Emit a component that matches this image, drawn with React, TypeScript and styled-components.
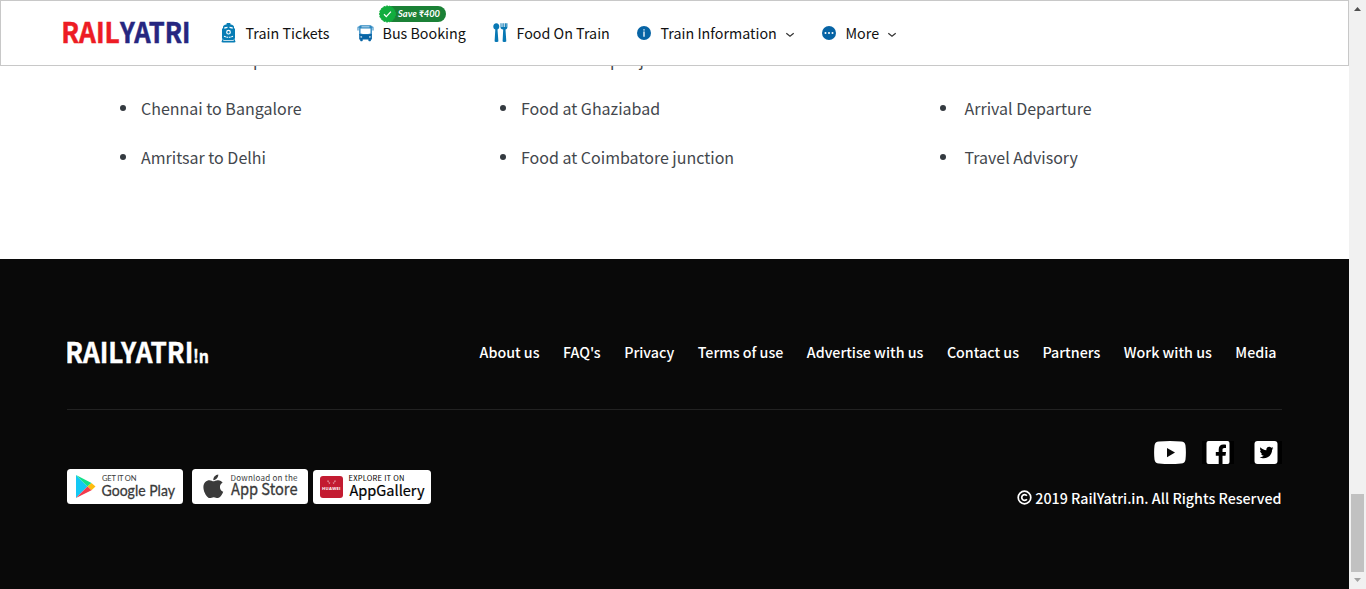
import React from "react";
import styled, { createGlobalStyle } from "styled-components";
import { FaApple, FaTwitter } from "react-icons/fa";

const sans = `"Noto Sans CJK SC", "Noto Sans", sans-serif`;

const GlobalStyle = createGlobalStyle`
  * { box-sizing: border-box; }
  html, body { margin: 0; height: 100%; overflow: hidden; }
  body { background: #fff; font-family: ${sans}; }
  #root { height: 100%; }
  a { color: inherit; text-decoration: none; }
  svg { display: block; }
`;

const Window = styled.div`
  display: flex;
  height: 589px;
  width: 1366px;
`;
const Page = styled.div`
  position: relative;
  width: 1349px;
  height: 589px;
  overflow: hidden;
`;

const Header = styled.header`
  position: absolute;
  inset: 0 0 auto 0;
  z-index: 2;
  height: 66px;
  border: 1px solid #c8c8c8;
  background: #fff;
  display: flex;
  align-items: center;
  padding-left: 61px;
`;
const Brand = styled.a`
  width: 159px;
`;
const Nav = styled.nav`
  display: flex;
  align-items: center;
`;
const NavItem = styled.a<{ $w: number }>`
  position: relative;
  display: flex;
  align-items: center;
  width: ${(p) => p.$w}px;
  height: 64px;
  font-size: 14.3px;
  color: #111;
  white-space: nowrap;
`;
const NavIcon = styled.span<{ $w: number }>`
  flex: none;
  width: ${(p) => p.$w}px;
`;
const NavLabel = styled.span`
  line-height: 22px;
  margin-top: -1px;
`;
const Caret = styled.svg`
  margin: 3px 0 0 8px;
`;
const SaveBadge = styled.span`
  position: absolute;
  left: 22px;
  top: 4px;
`;

const Lists = styled.main`
  height: 259px;
  padding: 34px 0 0 123px;
  display: flex;
`;
const List = styled.ul<{ $w: number; $gap: number }>`
  list-style: none;
  margin: 0;
  padding: 0;
  width: ${(p) => p.$w}px;
  --gap: ${(p) => p.$gap}px;
`;
const ListItem = styled.li`
  display: flex;
  align-items: center;
  height: 49px;
  font-size: 16px;
  color: #43474d;
  white-space: nowrap;
  &::before {
    content: "";
    width: 6px;
    height: 6px;
    margin: 1px calc(var(--gap) - 3px) 0 -3px;
    border-radius: 50%;
    background: #343a40;
  }
`;

const Footer = styled.footer`
  height: 330px;
  padding: 0 67px;
  background: #090909;
  color: #fff;
`;
const FooterTop = styled.div`
  display: flex;
  justify-content: space-between;
  height: 151px;
  padding-top: 72px;
  border-bottom: 1px solid #222;
`;
const FooterLinks = styled.div`
  display: flex;
  gap: 23.5px;
  padding: 9px 5.5px 0 0;
  font-size: 14.25px;
  font-weight: 500;
  line-height: 24px;
  white-space: nowrap;
`;
const FooterBottom = styled.div`
  display: flex;
  justify-content: space-between;
`;
const Stores = styled.div`
  display: flex;
  padding-top: 59px;
  gap: 9px;
  & > :last-child { margin-left: -4px; }
`;
const Legal = styled.div`
  display: flex;
  flex-direction: column;
  align-items: flex-end;
  padding-top: 31px;
`;
const Social = styled.div`
  display: flex;
  gap: 16px;
`;
const Copyright = styled.div`
  display: flex;
  align-items: center;
  gap: 3.5px;
  margin: 22px .5px 0 0;
  font-size: 14.25px;
  font-weight: 500;
  line-height: 24px;
  white-space: nowrap;
  svg { margin-top: -1px; }
`;

const Scrollbar = styled.div`
  display: flex;
  flex-direction: column;
  align-items: center;
  justify-content: space-between;
  width: 17px;
  padding: 7px 0;
  background: #f1f1f1;
`;
const Thumb = styled.div`
  width: 13px;
  height: 78px;
  margin: auto 0 6px;
  background: #c1c1c1;
`;

const TrainIcon = () => (
  <svg width="15" height="20" viewBox="0 0 15 20">
    <path fill="#087db5" fillRule="evenodd" d="M5.500 1.500V.7Q5.500 0 6.200 0h2.600q.7 0 .7.700v.8Q13 2 13 4v1.200q1 0 1 .8v9q0 1-1 1H2q-1 0-1-1V6q0-.8 1-.8V4Q2 2 5.500 1.500ZM3.300 4.200v1.600l3.200-.7V3.700ZM11.700 4.200v1.600l-3.200-.7V3.700ZM7.500 6.800a2.400 2.400 0 1 0 0 4.800 2.400 2.400 0 0 0 0-4.800ZM7.500 8a1.200 1.200 0 1 1 0 2.400 1.200 1.200 0 0 1 0-2.400Z" />
    <path fill="none" stroke="#fff" strokeWidth="1.200" strokeDasharray="1.800 .7" d="M3 13.300Q7.500 15.200 12 13.300" />
    <path fill="none" stroke="#087db5" strokeWidth="1.400" d="M2.400 15.500 1.100 19.300M12.600 15.500l1.300 3.800M1.500 18.800h12M3 16.500h9" />
  </svg>
);
const BusIcon = () => (
  <svg width="18" height="17" viewBox="0 0 18 17">
    <path fill="#2a86c0" fillRule="evenodd" d="M3.800.2h9.400Q14.500.2 14.900 1.500h.7q.9 0 .9 1v3h-1V2.600h-.6V10H2.200V2.600h-.7v2.900H.5v-3q0-1 .9-1h.7Q2.500.2 3.800.2ZM4.500 1.500v.8h8v-.8ZM3.500 3.600v5q5 1 10 0v-5Z" />
    <path fill="#0764a5" fillRule="evenodd" d="M2.200 9q6.300 1.200 12.700 0v5.500h-1v1q0 .7-.7.700h-1.100q-.7 0-.7-.7v-1H5.700v1q0 .7-.7.700H3.900q-.7 0-.7-.7v-1h-1ZM3.500 11.200v1.200h1.600v-1ZM13.600 11.200v1.200H12v-1Z" />
  </svg>
);
const FoodIcon = () => (
  <svg width="15" height="20" viewBox="0 0 15 20" fill="#0878b4">
    <path d="M3.300.3C5.200.300 6.300 1.700 6.300 3.500c0 1.500-.7 2.600-1.800 3.100l.9 11.700c0 1-3.900 1-3.800 0l.7-11.700C1 6.100.3 5 .3 3.500.300 1.700 1.400.3 3.300.3Z" />
    <path d="M7.500.3h1V4h1V.3h1.200V4h1V.3h1.200V4h.4V.3h1.100v3.800c0 1.300-.8 2.200-1.900 2.500l.8 11.700c0 1-3.800 1-3.700 0l.6-11.700C8.200 6.300 7.500 5.400 7.500 4.100Z" />
  </svg>
);
const InfoIcon = () => (
  <svg width="14" height="14" viewBox="0 0 14 14">
    <circle cx="7" cy="7" r="7" fill="#0764a5" />
    <path stroke="#fff" strokeWidth="1.300" d="M7 3.200v1.200M7 5.500v5.300" />
  </svg>
);
const MoreIcon = () => (
  <svg width="14" height="14" viewBox="0 0 14 14">
    <circle cx="7" cy="7" r="7" fill="#0764a5" />
    <g fill="#fff"><circle cx="3.500" cy="7" r="1" /><circle cx="7" cy="7" r="1" /><circle cx="10.500" cy="7" r="1" /></g>
  </svg>
);
const Down = () => (
  <Caret width="10" height="6" viewBox="0 0 10 6">
    <path d="M1.300 1.200 5 4.300l3.700-3.100" fill="none" stroke="#333" strokeWidth="1.200" />
  </Caret>
);

const Logo = () => (
  <svg width="132" height="64" viewBox="0 0 132 64" fontFamily={sans} fontWeight="700" fontSize="28.500">
    <text x="-.7" y="41.500" fill="#ed1c24" stroke="#ed1c24" strokeWidth=".5" textLength="58.500" lengthAdjust="spacingAndGlyphs">RAIL</text>
    <text x="58" y="41.500" fill="#262680" stroke="#262680" strokeWidth=".5" textLength="70.500" lengthAdjust="spacingAndGlyphs">YATRI</text>
  </svg>
);
const FooterLogo = () => (
  <svg width="146" height="56" viewBox="0 0 146 56" fontFamily={sans} fontWeight="700" fill="#fff" stroke="#fff" strokeWidth=".4">
    <text x="-1.700" y="32" fontSize="27.500" textLength="128" lengthAdjust="spacingAndGlyphs">RAILYATRI</text>
    <text x="126" y="32" fontSize="18" textLength="16" lengthAdjust="spacingAndGlyphs">!n</text>
  </svg>
);

const GooglePlay = () => (
  <svg width="116" height="35" viewBox="0 0 116 35">
    <rect width="116" height="35" rx="3.500" fill="#fff" />
    <path fill="#13c8f4" d="M9 6v23l11.500-11.500Z" />
    <path fill="#13e08a" d="m9 6 15.500 8-4 3.500Z" />
    <path fill="#fdbd0e" d="m24.500 14 4 3.500-4 3.700-4-3.700Z" />
    <path fill="#f33b4d" d="m20.500 17.500 4 3.700L9 29Z" />
    <g fill="#3a3a3a" fontFamily="Lato">
      <text x="35" y="11.500" fontSize="7.600" textLength="34.500">GET IT ON</text>
      <text x="34.500" y="26.600" fontSize="16" stroke="#3a3a3a" strokeWidth=".3" textLength="73.500" lengthAdjust="spacingAndGlyphs">Google Play</text>
    </g>
  </svg>
);
const AppStore = () => (
  <svg width="116" height="35" viewBox="0 0 116 35">
    <rect width="116" height="35" rx="3.500" fill="#fff" />
    <FaApple x="7.800" y="3.800" size={27} color="#3a3a3a" />
    <g fill="#3a3a3a" fontFamily={sans}>
      <text x="38.500" y="11.500" fontSize="8" textLength="67">Download on the</text>
      <text x="39" y="26.300" fontSize="16" stroke="#3a3a3a" strokeWidth=".3" textLength="66.500" lengthAdjust="spacingAndGlyphs">App Store</text>
    </g>
  </svg>
);
const AppGallery = () => (
  <svg width="118" height="35" viewBox="0 0 118 35">
    <rect y="1" width="118" height="34" rx="3.500" fill="#fff" />
    <rect x="7" y="7" width="23" height="22" rx="3" fill="#c31b31" />
    <path d="M15 11.500c0 3 1.500 3 2.500 2M22 11.500c0 3-1.500 3-2.500 2" fill="none" stroke="#fff" strokeWidth=".8" strokeDasharray="1.500 1" />
    <text x="9" y="21" fontSize="4.200" fontFamily="Open Sans" fontWeight="700" fill="#fff" textLength="18.500">HUAWEI</text>
    <g fontFamily={sans}>
      <text x="35.500" y="11.800" fontSize="7.500" textLength="56">EXPLORE IT ON</text>
      <text x="36.500" y="26.800" fontSize="14.500" stroke="#000" strokeWidth=".2" textLength="75" lengthAdjust="spacingAndGlyphs">AppGallery</text>
    </g>
  </svg>
);

const YouTube = () => (
  <svg width="32" height="23" viewBox="0 0 32 23">
    <path fill="#fff" d="M5 .6Q16-.5 27 .6q4 .2 4.500 4 .8 7 0 13.800-.5 3.800-4.500 4-11 1.100-22 0-4-.2-4.500-4-.8-6.800 0-13.800Q1 .8 5 .6Z" />
    <path fill="#090909" d="m13 7 8 4.600L13 16.300Z" />
  </svg>
);
const Facebook = () => (
  <svg width="32" height="23" viewBox="0 0 32 23">
    <path d="M0 0h32v23H0z" />
    <rect x="4.500" width="23" height="23" rx="2" fill="#fff" />
    <path d="M16.700 23v-8.300h-2.900v-3.600h2.900V8.600c0-3.300 1.800-5 4.800-5 1 0 1.800.1 2.500.2V7h-1.700c-1.400 0-1.800.7-1.800 1.800v2.300H24l-.5 3.600h-3V23Z" />
  </svg>
);
const Twitter = () => (
  <svg width="32" height="23" viewBox="0 0 32 23">
    <path d="M0 0h32v23H0z" />
    <rect x="4.500" width="23" height="23" rx="3" fill="#fff" />
    <FaTwitter x="9.500" y="4.500" size={14} color="#000" />
  </svg>
);

const columns = [
  { w: 380, gap: 18, items: ["Lucknow to Jaipur", "Chennai to Bangalore", "Amritsar to Delhi"] },
  { w: 440, gap: 18, items: ["Food at Kanpur junction", "Food at Ghaziabad", "Food at Coimbatore junction"] },
  { w: 300, gap: 21.5, items: ["Train Reservation Rules", "Arrival Departure", "Travel Advisory"] },
];
const links = ["About us", "FAQ's", "Privacy", "Terms of use", "Advertise with us", "Contact us", "Partners", "Work with us", "Media"];

export default function App() {
  return (
    <Window>
      <GlobalStyle />
      <Page>
        <Header>
          <Brand><Logo /></Brand>
          <Nav>
            <NavItem $w={136}><NavIcon $w={24.5}><TrainIcon /></NavIcon><NavLabel>Train Tickets</NavLabel></NavItem>
            <NavItem $w={135.5}>
              <NavIcon $w={25.5}><BusIcon /></NavIcon><NavLabel>Bus Booking</NavLabel>
              <SaveBadge>
                <svg width="68" height="18" viewBox="0 0 68 18">
                  <rect x="5" y="1" width="62" height="16" rx="8" fill="#1b8136" />
                  <circle cx="8.500" cy="9" r="8" fill="#11ad3e" stroke="#11ad3e" strokeDasharray="2 1" />
                  <path d="m5 9.300 2.300 2.300 4.600-5" fill="none" stroke="#fff" strokeWidth="1.300" />
                  <text x="19" y="12.300" fontFamily="Lato" fontSize="9" fontWeight="700" fontStyle="italic" fill="#fff" textLength="42" lengthAdjust="spacingAndGlyphs">Save ₹400</text>
                </svg>
              </SaveBadge>
            </NavItem>
            <NavItem $w={144}><NavIcon $w={24}><FoodIcon /></NavIcon><NavLabel>Food On Train</NavLabel></NavItem>
            <NavItem $w={185}><NavIcon $w={24}><InfoIcon /></NavIcon><NavLabel>Train Information</NavLabel><Down /></NavItem>
            <NavItem $w={90}><NavIcon $w={24}><MoreIcon /></NavIcon><NavLabel>More</NavLabel><Down /></NavItem>
          </Nav>
        </Header>
        <Lists>
          {columns.map((c) => (
            <List key={c.w} $w={c.w} $gap={c.gap}>
              {c.items.map((t) => <ListItem key={t}><a>{t}</a></ListItem>)}
            </List>
          ))}
        </Lists>
        <Footer>
          <FooterTop>
            <FooterLogo />
            <FooterLinks>{links.map((l) => <a key={l}>{l}</a>)}</FooterLinks>
          </FooterTop>
          <FooterBottom>
            <Stores><GooglePlay /><AppStore /><AppGallery /></Stores>
            <Legal>
              <Social><YouTube /><Facebook /><Twitter /></Social>
              <Copyright>
                <svg width="15" height="15" viewBox="0 0 15 15" fill="none" stroke="#fff" strokeWidth="1.700">
                  <circle cx="7.500" cy="7.500" r="6.300" /><path d="M9.900 5.700A2.900 2.900 0 1 0 9.900 9.300" />
                </svg>
                2019 RailYatri.in. All Rights Reserved
              </Copyright>
            </Legal>
          </FooterBottom>
        </Footer>
      </Page>
      <Scrollbar>
        <svg width="7" height="4"><path d="M0 4h7L3.500 0Z" fill="#505050" /></svg>
        <Thumb />
        <svg width="7" height="4"><path d="M0 0h7L3.500 4Z" fill="#a3a3a3" /></svg>
      </Scrollbar>
    </Window>
  );
}
